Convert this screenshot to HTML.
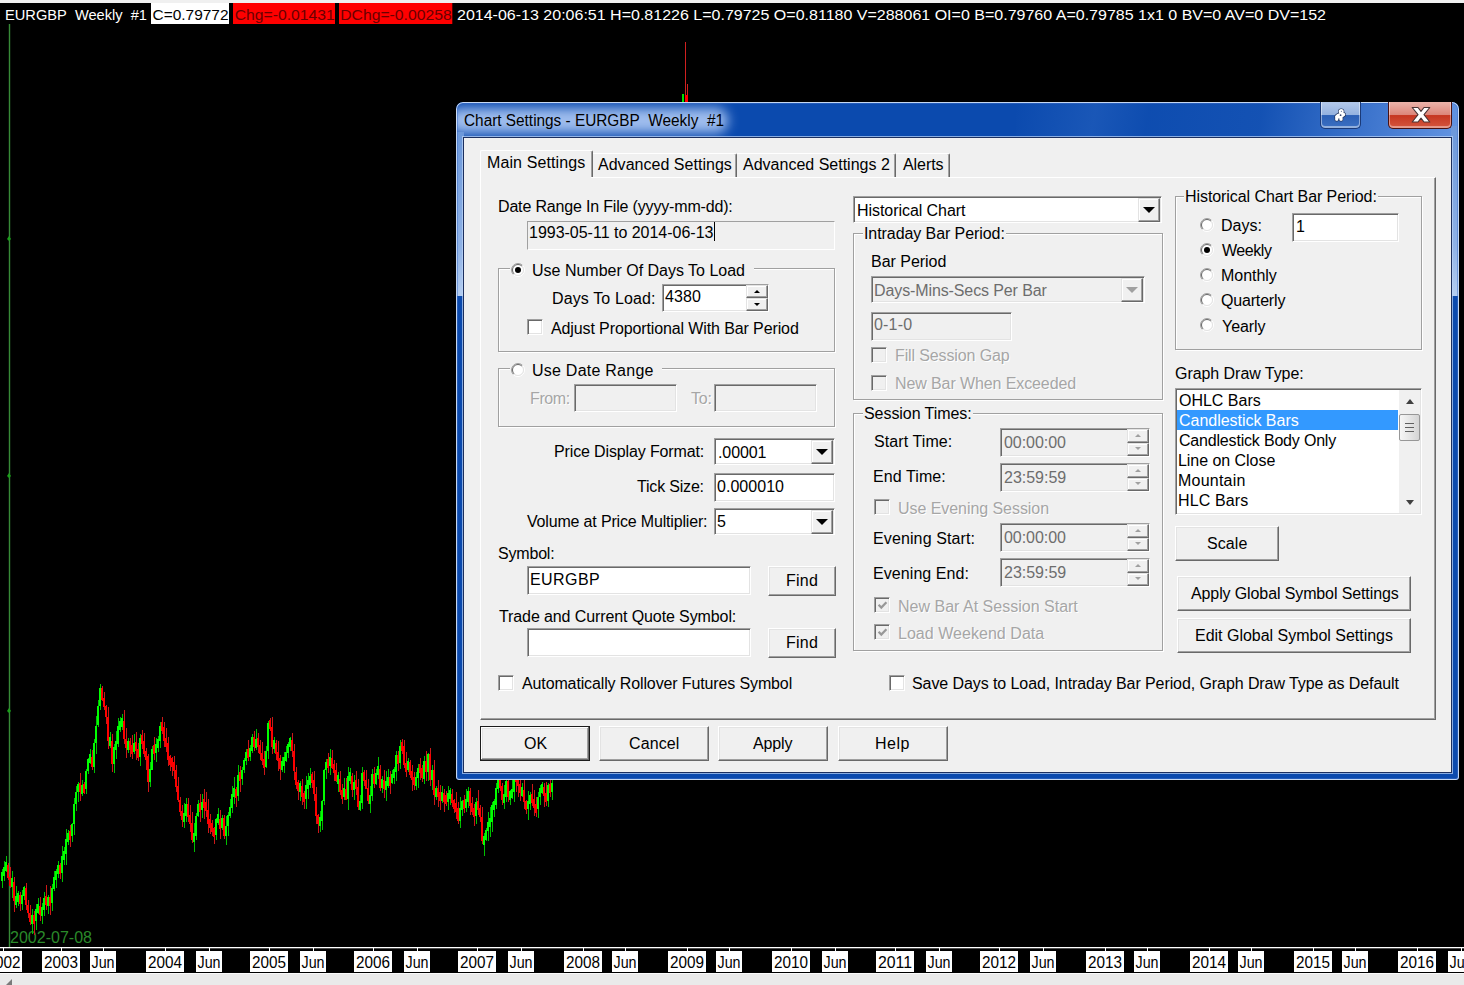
<!DOCTYPE html><html><head><meta charset="utf-8"><title>Chart Settings - EURGBP Weekly #1</title><style>
*{box-sizing:border-box;margin:0;padding:0}
html,body{width:1464px;height:985px;overflow:hidden;background:#000}
body{font-family:"Liberation Sans",sans-serif;font-size:16px;color:#000;position:relative}
.abs{position:absolute}
#chart{left:0;top:0;width:1464px;height:985px}
#scroll{left:0;top:973px;width:1464px;height:12px;background:#eaeaea;border-top:1px solid #fafafa}
#dlg{left:456px;top:102px;width:1003px;height:678px;border-radius:7px 7px 3px 3px;background:#0b4aae;overflow:hidden}
#dlg .edge{border-radius:7px 7px 3px 3px;left:0;top:0;right:0;bottom:0;box-shadow:inset 0 0 0 1px rgba(225,236,252,.85), inset 0 0 0 2px rgba(60,110,200,.5)}
#client{left:8px;top:36px;width:987px;height:634px;background:#f0f0f0;box-shadow:0 0 0 1px #1c2f5e, 0 0 0 2px rgba(190,214,248,.7)}
.t{position:absolute;white-space:pre;line-height:20px;height:20px;font-size:16px}
.dis{color:#a6a6a6;text-shadow:1px 1px 0 #fff}
.gt{color:#6d6d6d}
.edit{position:absolute;background:#fff;border:1px solid;border-color:#a0a0a0 #fff #fff #a0a0a0;box-shadow:inset 1px 1px 0 #696969, inset -1px -1px 0 #e3e3e3}
.edit.ro{background:#f0f0f0}
.btn{position:absolute;background:#f0f0f0;border:1px solid;border-color:#fff #696969 #696969 #fff;box-shadow:inset -1px -1px 0 #a0a0a0, inset 1px 1px 0 #e3e3e3}
.btn.def{border-color:#1c1c1c;box-shadow:inset -1px -1px 0 #696969, inset 1px 1px 0 #fff, inset -2px -2px 0 #a0a0a0, inset 2px 2px 0 #e3e3e3}
.grp{position:absolute;border:1px solid #a0a0a0;box-shadow:1px 1px 0 #fff, inset 1px 1px 0 #fff}
.gap{position:absolute;background:#f0f0f0;height:4px}
.cb{position:absolute;width:16px;height:16px;background:#fff;border:1px solid;border-color:#a0a0a0 #fff #fff #a0a0a0;box-shadow:inset 1px 1px 0 #696969, inset -1px -1px 0 #e3e3e3}
.cb.d{background:#f0f0f0}
.rb{position:absolute;width:14px;height:14px}
.dd{position:absolute;right:1px;top:1px;bottom:0px;width:22px;background:#f0f0f0;border:1px solid;border-color:#e3e3e3 #696969 #696969 #e3e3e3;box-shadow:inset -1px -1px 0 #a0a0a0, inset 1px 1px 0 #fff}
.dd:after{content:"";position:absolute;left:4px;top:8px;border:6px solid transparent;border-top:6px solid #000;border-bottom:0}
.dd.d:after{border-top-color:#a0a0a0}
.spin{position:absolute;right:0px;width:22px;height:calc(50% - 0px);background:#f0f0f0;border:1px solid;border-color:#e3e3e3 #696969 #696969 #e3e3e3;box-shadow:inset -1px -1px 0 #a0a0a0, inset 1px 1px 0 #fff}
.spin.u{top:0px}.spin.l{bottom:0px}
.spin:after{content:"";position:absolute;left:6.5px;top:3.5px;border:3.5px solid transparent}
.spin.u:after{border-bottom:3.5px solid #000;border-top:0}
.spin.l:after{border-top:3.5px solid #000;border-bottom:0}
.spin.d.u:after{border-bottom-color:#a0a0a0}.spin.d.l:after{border-top-color:#a0a0a0}
</style></head><body>
<svg id="chart" class="abs" width="1464" height="985" viewBox="0 0 1464 985" font-family="Liberation Sans, sans-serif" font-size="16">
<rect x="0" y="0" width="1464" height="985" fill="#000"/>
<rect x="0" y="0" width="1464" height="3" fill="#f0f0f0"/>
<rect x="151" y="3" width="78" height="21" fill="#fff"/>
<rect x="233" y="3" width="102" height="21" fill="#ff0000"/>
<rect x="339" y="3" width="113.3" height="21" fill="#ff0000"/>
<g style="white-space:pre" font-size="15">
<text x="5" y="20" textLength="142" lengthAdjust="spacingAndGlyphs" fill="#fff" >EURGBP&#160;&#160;Weekly&#160;&#160;#1</text>
<text x="152.5" y="20" textLength="76" lengthAdjust="spacingAndGlyphs" fill="#000" >C=0.79772</text>
<text x="234.7" y="20" textLength="100" lengthAdjust="spacingAndGlyphs" fill="#6a0000" >Chg=-0.01431</text>
<text x="340.2" y="20" textLength="111.5" lengthAdjust="spacingAndGlyphs" fill="#6a0000" >DChg=-0.00258</text>
<text x="457" y="20" textLength="869" lengthAdjust="spacingAndGlyphs" fill="#fff" >2014-06-13 20:06:51 H=0.81226 L=0.79725 O=0.81180 V=288061 OI=0 B=0.79760 A=0.79785 1x1 0 BV=0 AV=0 DV=152</text>
</g>
<rect x="8.8" y="24" width="1.4" height="923" fill="#378a37"/>
<polygon points="9,236 11,239 9,241 7,239" fill="#1a9e1a"/>
<polygon points="9,473 11,476 9,478 7,476" fill="#1a9e1a"/>
<polygon points="9,708 11,711 9,713 7,711" fill="#1a9e1a"/>
<text x="10" y="943" textLength="82" lengthAdjust="spacingAndGlyphs" fill="#2a8a2a" >2002-07-08</text>
<rect x="2" y="869" width="1" height="19" fill="#00c000"/>
<rect x="1" y="872" width="2" height="9" fill="#00ff00"/>
<rect x="4" y="861" width="1" height="20" fill="#00c000"/>
<rect x="3" y="867" width="2" height="9" fill="#00ff00"/>
<rect x="6" y="856" width="1" height="16" fill="#00c000"/>
<rect x="5" y="862" width="2" height="9" fill="#00ff00"/>
<rect x="8" y="863" width="1" height="17" fill="#cc1818"/>
<rect x="7" y="865" width="2" height="13" fill="#ff0000"/>
<rect x="10" y="867" width="1" height="21" fill="#cc1818"/>
<rect x="9" y="877" width="2" height="9" fill="#ff0000"/>
<rect x="12" y="871" width="1" height="27" fill="#00c000"/>
<rect x="11" y="878" width="2" height="9" fill="#00ff00"/>
<rect x="14" y="877" width="1" height="35" fill="#cc1818"/>
<rect x="13" y="882" width="2" height="19" fill="#ff0000"/>
<rect x="16" y="886" width="1" height="22" fill="#00c000"/>
<rect x="15" y="896" width="2" height="9" fill="#00ff00"/>
<rect x="18" y="891" width="1" height="15" fill="#00c000"/>
<rect x="17" y="893" width="2" height="9" fill="#00ff00"/>
<rect x="20" y="892" width="1" height="19" fill="#cc1818"/>
<rect x="19" y="895" width="2" height="9" fill="#ff0000"/>
<rect x="22" y="890" width="1" height="20" fill="#00c000"/>
<rect x="21" y="895" width="2" height="9" fill="#00ff00"/>
<rect x="24" y="886" width="1" height="14" fill="#00c000"/>
<rect x="23" y="887" width="2" height="9" fill="#00ff00"/>
<rect x="26" y="883" width="1" height="27" fill="#cc1818"/>
<rect x="25" y="888" width="2" height="17" fill="#ff0000"/>
<rect x="28" y="900" width="1" height="18" fill="#cc1818"/>
<rect x="27" y="905" width="2" height="8" fill="#ff0000"/>
<rect x="30" y="905" width="1" height="20" fill="#cc1818"/>
<rect x="29" y="913" width="2" height="9" fill="#ff0000"/>
<rect x="32" y="909" width="1" height="25" fill="#00c000"/>
<rect x="31" y="915" width="2" height="9" fill="#00ff00"/>
<rect x="34" y="911" width="1" height="24" fill="#cc1818"/>
<rect x="33" y="915" width="2" height="9" fill="#ff0000"/>
<rect x="36" y="904" width="1" height="26" fill="#00c000"/>
<rect x="35" y="909" width="2" height="12" fill="#00ff00"/>
<rect x="38" y="898" width="1" height="16" fill="#00c000"/>
<rect x="37" y="904" width="2" height="9" fill="#00ff00"/>
<rect x="40" y="897" width="1" height="24" fill="#cc1818"/>
<rect x="39" y="906" width="2" height="9" fill="#ff0000"/>
<rect x="42" y="903" width="1" height="21" fill="#00c000"/>
<rect x="41" y="907" width="2" height="9" fill="#00ff00"/>
<rect x="44" y="892" width="1" height="24" fill="#00c000"/>
<rect x="43" y="898" width="2" height="12" fill="#00ff00"/>
<rect x="46" y="885" width="1" height="25" fill="#cc1818"/>
<rect x="45" y="896" width="2" height="9" fill="#ff0000"/>
<rect x="48" y="895" width="1" height="19" fill="#00c000"/>
<rect x="47" y="897" width="2" height="9" fill="#00ff00"/>
<rect x="50" y="886" width="1" height="29" fill="#cc1818"/>
<rect x="49" y="897" width="2" height="9" fill="#ff0000"/>
<rect x="52" y="884" width="1" height="27" fill="#00c000"/>
<rect x="51" y="888" width="2" height="15" fill="#00ff00"/>
<rect x="54" y="871" width="1" height="20" fill="#00c000"/>
<rect x="53" y="877" width="2" height="12" fill="#00ff00"/>
<rect x="56" y="869" width="1" height="19" fill="#00c000"/>
<rect x="55" y="871" width="2" height="9" fill="#00ff00"/>
<rect x="58" y="861" width="1" height="17" fill="#00c000"/>
<rect x="57" y="865" width="2" height="9" fill="#00ff00"/>
<rect x="60" y="863" width="1" height="16" fill="#cc1818"/>
<rect x="59" y="865" width="2" height="9" fill="#ff0000"/>
<rect x="62" y="846" width="1" height="36" fill="#00c000"/>
<rect x="61" y="856" width="2" height="17" fill="#00ff00"/>
<rect x="64" y="847" width="1" height="18" fill="#00c000"/>
<rect x="63" y="851" width="2" height="9" fill="#00ff00"/>
<rect x="66" y="829" width="1" height="36" fill="#00c000"/>
<rect x="65" y="839" width="2" height="15" fill="#00ff00"/>
<rect x="68" y="830" width="1" height="15" fill="#00c000"/>
<rect x="67" y="833" width="2" height="9" fill="#00ff00"/>
<rect x="70" y="825" width="1" height="22" fill="#cc1818"/>
<rect x="69" y="831" width="2" height="9" fill="#ff0000"/>
<rect x="72" y="823" width="1" height="19" fill="#00c000"/>
<rect x="71" y="824" width="2" height="12" fill="#00ff00"/>
<rect x="74" y="798" width="1" height="37" fill="#00c000"/>
<rect x="73" y="804" width="2" height="20" fill="#00ff00"/>
<rect x="76" y="786" width="1" height="25" fill="#00c000"/>
<rect x="75" y="792" width="2" height="12" fill="#00ff00"/>
<rect x="78" y="782" width="1" height="20" fill="#00c000"/>
<rect x="77" y="784" width="2" height="8" fill="#00ff00"/>
<rect x="80" y="773" width="1" height="28" fill="#cc1818"/>
<rect x="79" y="783" width="2" height="9" fill="#ff0000"/>
<rect x="82" y="780" width="1" height="16" fill="#00c000"/>
<rect x="81" y="785" width="2" height="9" fill="#00ff00"/>
<rect x="84" y="782" width="1" height="12" fill="#cc1818"/>
<rect x="83" y="784" width="2" height="9" fill="#ff0000"/>
<rect x="86" y="769" width="1" height="25" fill="#00c000"/>
<rect x="85" y="771" width="2" height="18" fill="#00ff00"/>
<rect x="88" y="758" width="1" height="16" fill="#00c000"/>
<rect x="87" y="759" width="2" height="12" fill="#00ff00"/>
<rect x="90" y="749" width="1" height="15" fill="#00c000"/>
<rect x="89" y="754" width="2" height="9" fill="#00ff00"/>
<rect x="92" y="750" width="1" height="20" fill="#cc1818"/>
<rect x="91" y="757" width="2" height="10" fill="#ff0000"/>
<rect x="94" y="739" width="1" height="34" fill="#00c000"/>
<rect x="93" y="743" width="2" height="24" fill="#00ff00"/>
<rect x="96" y="716" width="1" height="38" fill="#00c000"/>
<rect x="95" y="726" width="2" height="17" fill="#00ff00"/>
<rect x="98" y="700" width="1" height="27" fill="#00c000"/>
<rect x="97" y="706" width="2" height="19" fill="#00ff00"/>
<rect x="100" y="684" width="1" height="26" fill="#00c000"/>
<rect x="99" y="688" width="2" height="18" fill="#00ff00"/>
<rect x="102" y="686" width="1" height="15" fill="#cc1818"/>
<rect x="101" y="688" width="2" height="12" fill="#ff0000"/>
<rect x="104" y="692" width="1" height="18" fill="#cc1818"/>
<rect x="103" y="698" width="2" height="9" fill="#ff0000"/>
<rect x="106" y="705" width="1" height="19" fill="#cc1818"/>
<rect x="105" y="706" width="2" height="11" fill="#ff0000"/>
<rect x="108" y="707" width="1" height="42" fill="#cc1818"/>
<rect x="107" y="717" width="2" height="24" fill="#ff0000"/>
<rect x="110" y="732" width="1" height="16" fill="#00c000"/>
<rect x="109" y="737" width="2" height="9" fill="#00ff00"/>
<rect x="112" y="734" width="1" height="38" fill="#cc1818"/>
<rect x="111" y="741" width="2" height="23" fill="#ff0000"/>
<rect x="114" y="744" width="1" height="29" fill="#00c000"/>
<rect x="113" y="747" width="2" height="17" fill="#00ff00"/>
<rect x="116" y="731" width="1" height="28" fill="#00c000"/>
<rect x="115" y="741" width="2" height="9" fill="#00ff00"/>
<rect x="118" y="718" width="1" height="29" fill="#00c000"/>
<rect x="117" y="726" width="2" height="18" fill="#00ff00"/>
<rect x="120" y="717" width="1" height="15" fill="#00c000"/>
<rect x="119" y="721" width="2" height="9" fill="#00ff00"/>
<rect x="122" y="714" width="1" height="16" fill="#00c000"/>
<rect x="121" y="718" width="2" height="9" fill="#00ff00"/>
<rect x="124" y="710" width="1" height="34" fill="#cc1818"/>
<rect x="123" y="721" width="2" height="18" fill="#ff0000"/>
<rect x="126" y="728" width="1" height="30" fill="#cc1818"/>
<rect x="125" y="739" width="2" height="9" fill="#ff0000"/>
<rect x="128" y="738" width="1" height="15" fill="#00c000"/>
<rect x="127" y="741" width="2" height="9" fill="#00ff00"/>
<rect x="130" y="738" width="1" height="19" fill="#cc1818"/>
<rect x="129" y="741" width="2" height="9" fill="#ff0000"/>
<rect x="132" y="735" width="1" height="24" fill="#cc1818"/>
<rect x="131" y="745" width="2" height="9" fill="#ff0000"/>
<rect x="134" y="734" width="1" height="20" fill="#00c000"/>
<rect x="133" y="743" width="2" height="9" fill="#00ff00"/>
<rect x="136" y="732" width="1" height="28" fill="#cc1818"/>
<rect x="135" y="742" width="2" height="9" fill="#ff0000"/>
<rect x="138" y="743" width="1" height="18" fill="#cc1818"/>
<rect x="137" y="749" width="2" height="9" fill="#ff0000"/>
<rect x="140" y="734" width="1" height="32" fill="#00c000"/>
<rect x="139" y="738" width="2" height="19" fill="#00ff00"/>
<rect x="142" y="730" width="1" height="19" fill="#cc1818"/>
<rect x="141" y="735" width="2" height="9" fill="#ff0000"/>
<rect x="144" y="733" width="1" height="24" fill="#cc1818"/>
<rect x="143" y="741" width="2" height="13" fill="#ff0000"/>
<rect x="146" y="748" width="1" height="22" fill="#cc1818"/>
<rect x="145" y="751" width="2" height="9" fill="#ff0000"/>
<rect x="148" y="754" width="1" height="38" fill="#cc1818"/>
<rect x="147" y="756" width="2" height="26" fill="#ff0000"/>
<rect x="150" y="762" width="1" height="25" fill="#00c000"/>
<rect x="149" y="769" width="2" height="13" fill="#00ff00"/>
<rect x="152" y="746" width="1" height="24" fill="#00c000"/>
<rect x="151" y="749" width="2" height="21" fill="#00ff00"/>
<rect x="154" y="737" width="1" height="23" fill="#cc1818"/>
<rect x="153" y="745" width="2" height="9" fill="#ff0000"/>
<rect x="156" y="738" width="1" height="24" fill="#00c000"/>
<rect x="155" y="744" width="2" height="9" fill="#00ff00"/>
<rect x="158" y="736" width="1" height="16" fill="#00c000"/>
<rect x="157" y="739" width="2" height="9" fill="#00ff00"/>
<rect x="160" y="722" width="1" height="26" fill="#00c000"/>
<rect x="159" y="726" width="2" height="15" fill="#00ff00"/>
<rect x="162" y="717" width="1" height="17" fill="#cc1818"/>
<rect x="161" y="722" width="2" height="9" fill="#ff0000"/>
<rect x="164" y="722" width="1" height="25" fill="#cc1818"/>
<rect x="163" y="727" width="2" height="14" fill="#ff0000"/>
<rect x="166" y="728" width="1" height="24" fill="#cc1818"/>
<rect x="165" y="738" width="2" height="9" fill="#ff0000"/>
<rect x="168" y="737" width="1" height="29" fill="#cc1818"/>
<rect x="167" y="743" width="2" height="17" fill="#ff0000"/>
<rect x="170" y="755" width="1" height="16" fill="#cc1818"/>
<rect x="169" y="756" width="2" height="9" fill="#ff0000"/>
<rect x="172" y="757" width="1" height="19" fill="#cc1818"/>
<rect x="171" y="758" width="2" height="9" fill="#ff0000"/>
<rect x="174" y="756" width="1" height="23" fill="#cc1818"/>
<rect x="173" y="762" width="2" height="9" fill="#ff0000"/>
<rect x="176" y="765" width="1" height="27" fill="#cc1818"/>
<rect x="175" y="770" width="2" height="17" fill="#ff0000"/>
<rect x="178" y="777" width="1" height="25" fill="#cc1818"/>
<rect x="177" y="786" width="2" height="14" fill="#ff0000"/>
<rect x="180" y="797" width="1" height="19" fill="#cc1818"/>
<rect x="179" y="800" width="2" height="12" fill="#ff0000"/>
<rect x="182" y="805" width="1" height="22" fill="#cc1818"/>
<rect x="181" y="811" width="2" height="9" fill="#ff0000"/>
<rect x="184" y="803" width="1" height="25" fill="#00c000"/>
<rect x="183" y="813" width="2" height="9" fill="#00ff00"/>
<rect x="186" y="798" width="1" height="24" fill="#00c000"/>
<rect x="185" y="804" width="2" height="12" fill="#00ff00"/>
<rect x="188" y="798" width="1" height="24" fill="#cc1818"/>
<rect x="187" y="804" width="2" height="13" fill="#ff0000"/>
<rect x="190" y="805" width="1" height="27" fill="#cc1818"/>
<rect x="189" y="815" width="2" height="9" fill="#ff0000"/>
<rect x="192" y="812" width="1" height="31" fill="#cc1818"/>
<rect x="191" y="823" width="2" height="17" fill="#ff0000"/>
<rect x="194" y="823" width="1" height="29" fill="#00c000"/>
<rect x="193" y="833" width="2" height="9" fill="#00ff00"/>
<rect x="196" y="813" width="1" height="27" fill="#00c000"/>
<rect x="195" y="816" width="2" height="20" fill="#00ff00"/>
<rect x="198" y="800" width="1" height="17" fill="#00c000"/>
<rect x="197" y="804" width="2" height="12" fill="#00ff00"/>
<rect x="200" y="794" width="1" height="28" fill="#cc1818"/>
<rect x="199" y="803" width="2" height="9" fill="#ff0000"/>
<rect x="202" y="794" width="1" height="24" fill="#00c000"/>
<rect x="201" y="802" width="2" height="8" fill="#00ff00"/>
<rect x="204" y="789" width="1" height="30" fill="#cc1818"/>
<rect x="203" y="799" width="2" height="9" fill="#ff0000"/>
<rect x="206" y="792" width="1" height="25" fill="#cc1818"/>
<rect x="205" y="802" width="2" height="9" fill="#ff0000"/>
<rect x="208" y="799" width="1" height="34" fill="#cc1818"/>
<rect x="207" y="810" width="2" height="14" fill="#ff0000"/>
<rect x="210" y="814" width="1" height="20" fill="#cc1818"/>
<rect x="209" y="819" width="2" height="9" fill="#ff0000"/>
<rect x="212" y="820" width="1" height="16" fill="#cc1818"/>
<rect x="211" y="823" width="2" height="9" fill="#ff0000"/>
<rect x="214" y="827" width="1" height="17" fill="#cc1818"/>
<rect x="213" y="828" width="2" height="9" fill="#ff0000"/>
<rect x="216" y="818" width="1" height="22" fill="#00c000"/>
<rect x="215" y="819" width="2" height="16" fill="#00ff00"/>
<rect x="218" y="808" width="1" height="17" fill="#00c000"/>
<rect x="217" y="814" width="2" height="9" fill="#00ff00"/>
<rect x="220" y="810" width="1" height="29" fill="#cc1818"/>
<rect x="219" y="819" width="2" height="10" fill="#ff0000"/>
<rect x="222" y="815" width="1" height="15" fill="#00c000"/>
<rect x="221" y="818" width="2" height="10" fill="#00ff00"/>
<rect x="224" y="815" width="1" height="24" fill="#cc1818"/>
<rect x="223" y="818" width="2" height="18" fill="#ff0000"/>
<rect x="226" y="816" width="1" height="29" fill="#00c000"/>
<rect x="225" y="826" width="2" height="10" fill="#00ff00"/>
<rect x="228" y="812" width="1" height="24" fill="#00c000"/>
<rect x="227" y="815" width="2" height="11" fill="#00ff00"/>
<rect x="230" y="799" width="1" height="19" fill="#00c000"/>
<rect x="229" y="807" width="2" height="9" fill="#00ff00"/>
<rect x="232" y="786" width="1" height="27" fill="#00c000"/>
<rect x="231" y="794" width="2" height="14" fill="#00ff00"/>
<rect x="234" y="777" width="1" height="27" fill="#00c000"/>
<rect x="233" y="788" width="2" height="9" fill="#00ff00"/>
<rect x="236" y="787" width="1" height="20" fill="#cc1818"/>
<rect x="235" y="789" width="2" height="9" fill="#ff0000"/>
<rect x="238" y="765" width="1" height="36" fill="#00c000"/>
<rect x="237" y="775" width="2" height="21" fill="#00ff00"/>
<rect x="240" y="766" width="1" height="26" fill="#cc1818"/>
<rect x="239" y="772" width="2" height="9" fill="#ff0000"/>
<rect x="242" y="767" width="1" height="18" fill="#00c000"/>
<rect x="241" y="770" width="2" height="9" fill="#00ff00"/>
<rect x="244" y="758" width="1" height="15" fill="#00c000"/>
<rect x="243" y="760" width="2" height="10" fill="#00ff00"/>
<rect x="246" y="749" width="1" height="16" fill="#00c000"/>
<rect x="245" y="752" width="2" height="9" fill="#00ff00"/>
<rect x="248" y="740" width="1" height="21" fill="#cc1818"/>
<rect x="247" y="749" width="2" height="9" fill="#ff0000"/>
<rect x="250" y="745" width="1" height="16" fill="#00c000"/>
<rect x="249" y="748" width="2" height="9" fill="#00ff00"/>
<rect x="252" y="734" width="1" height="19" fill="#00c000"/>
<rect x="251" y="737" width="2" height="14" fill="#00ff00"/>
<rect x="254" y="731" width="1" height="20" fill="#cc1818"/>
<rect x="253" y="737" width="2" height="10" fill="#ff0000"/>
<rect x="256" y="729" width="1" height="21" fill="#00c000"/>
<rect x="255" y="739" width="2" height="9" fill="#00ff00"/>
<rect x="258" y="733" width="1" height="20" fill="#cc1818"/>
<rect x="257" y="738" width="2" height="9" fill="#ff0000"/>
<rect x="260" y="740" width="1" height="20" fill="#cc1818"/>
<rect x="259" y="745" width="2" height="9" fill="#ff0000"/>
<rect x="262" y="742" width="1" height="23" fill="#cc1818"/>
<rect x="261" y="753" width="2" height="8" fill="#ff0000"/>
<rect x="264" y="751" width="1" height="24" fill="#cc1818"/>
<rect x="263" y="759" width="2" height="9" fill="#ff0000"/>
<rect x="266" y="746" width="1" height="22" fill="#00c000"/>
<rect x="265" y="751" width="2" height="16" fill="#00ff00"/>
<rect x="268" y="721" width="1" height="38" fill="#00c000"/>
<rect x="267" y="723" width="2" height="28" fill="#00ff00"/>
<rect x="270" y="718" width="1" height="13" fill="#cc1818"/>
<rect x="269" y="720" width="2" height="9" fill="#ff0000"/>
<rect x="272" y="717" width="1" height="37" fill="#cc1818"/>
<rect x="271" y="727" width="2" height="20" fill="#ff0000"/>
<rect x="274" y="737" width="1" height="16" fill="#00c000"/>
<rect x="273" y="740" width="2" height="9" fill="#00ff00"/>
<rect x="276" y="740" width="1" height="20" fill="#cc1818"/>
<rect x="275" y="743" width="2" height="11" fill="#ff0000"/>
<rect x="278" y="741" width="1" height="30" fill="#cc1818"/>
<rect x="277" y="752" width="2" height="9" fill="#ff0000"/>
<rect x="280" y="755" width="1" height="25" fill="#cc1818"/>
<rect x="279" y="758" width="2" height="11" fill="#ff0000"/>
<rect x="282" y="757" width="1" height="15" fill="#00c000"/>
<rect x="281" y="761" width="2" height="9" fill="#00ff00"/>
<rect x="284" y="752" width="1" height="21" fill="#00c000"/>
<rect x="283" y="757" width="2" height="9" fill="#00ff00"/>
<rect x="286" y="746" width="1" height="16" fill="#00c000"/>
<rect x="285" y="752" width="2" height="9" fill="#00ff00"/>
<rect x="288" y="742" width="1" height="16" fill="#00c000"/>
<rect x="287" y="744" width="2" height="9" fill="#00ff00"/>
<rect x="290" y="737" width="1" height="14" fill="#00c000"/>
<rect x="289" y="738" width="2" height="9" fill="#00ff00"/>
<rect x="292" y="733" width="1" height="24" fill="#cc1818"/>
<rect x="291" y="740" width="2" height="11" fill="#ff0000"/>
<rect x="294" y="744" width="1" height="36" fill="#cc1818"/>
<rect x="293" y="751" width="2" height="20" fill="#ff0000"/>
<rect x="296" y="767" width="1" height="22" fill="#cc1818"/>
<rect x="295" y="772" width="2" height="13" fill="#ff0000"/>
<rect x="298" y="780" width="1" height="20" fill="#cc1818"/>
<rect x="297" y="782" width="2" height="9" fill="#ff0000"/>
<rect x="300" y="781" width="1" height="20" fill="#00c000"/>
<rect x="299" y="783" width="2" height="9" fill="#00ff00"/>
<rect x="302" y="779" width="1" height="26" fill="#cc1818"/>
<rect x="301" y="786" width="2" height="11" fill="#ff0000"/>
<rect x="304" y="791" width="1" height="18" fill="#cc1818"/>
<rect x="303" y="793" width="2" height="9" fill="#ff0000"/>
<rect x="306" y="776" width="1" height="33" fill="#00c000"/>
<rect x="305" y="785" width="2" height="14" fill="#00ff00"/>
<rect x="308" y="773" width="1" height="26" fill="#00c000"/>
<rect x="307" y="780" width="2" height="9" fill="#00ff00"/>
<rect x="310" y="768" width="1" height="20" fill="#00c000"/>
<rect x="309" y="776" width="2" height="9" fill="#00ff00"/>
<rect x="312" y="772" width="1" height="16" fill="#cc1818"/>
<rect x="311" y="774" width="2" height="9" fill="#ff0000"/>
<rect x="314" y="771" width="1" height="30" fill="#cc1818"/>
<rect x="313" y="780" width="2" height="14" fill="#ff0000"/>
<rect x="316" y="787" width="1" height="37" fill="#cc1818"/>
<rect x="315" y="794" width="2" height="22" fill="#ff0000"/>
<rect x="318" y="814" width="1" height="19" fill="#cc1818"/>
<rect x="317" y="815" width="2" height="9" fill="#ff0000"/>
<rect x="320" y="811" width="1" height="21" fill="#00c000"/>
<rect x="319" y="817" width="2" height="9" fill="#00ff00"/>
<rect x="322" y="800" width="1" height="30" fill="#00c000"/>
<rect x="321" y="801" width="2" height="20" fill="#00ff00"/>
<rect x="324" y="769" width="1" height="36" fill="#00c000"/>
<rect x="323" y="770" width="2" height="31" fill="#00ff00"/>
<rect x="326" y="759" width="1" height="20" fill="#00c000"/>
<rect x="325" y="762" width="2" height="8" fill="#00ff00"/>
<rect x="328" y="753" width="1" height="20" fill="#cc1818"/>
<rect x="327" y="759" width="2" height="9" fill="#ff0000"/>
<rect x="330" y="749" width="1" height="26" fill="#00c000"/>
<rect x="329" y="757" width="2" height="9" fill="#00ff00"/>
<rect x="332" y="750" width="1" height="19" fill="#cc1818"/>
<rect x="331" y="758" width="2" height="10" fill="#ff0000"/>
<rect x="334" y="760" width="1" height="21" fill="#cc1818"/>
<rect x="333" y="764" width="2" height="9" fill="#ff0000"/>
<rect x="336" y="763" width="1" height="19" fill="#cc1818"/>
<rect x="335" y="770" width="2" height="11" fill="#ff0000"/>
<rect x="338" y="772" width="1" height="20" fill="#00c000"/>
<rect x="337" y="775" width="2" height="9" fill="#00ff00"/>
<rect x="340" y="771" width="1" height="24" fill="#cc1818"/>
<rect x="339" y="779" width="2" height="13" fill="#ff0000"/>
<rect x="342" y="784" width="1" height="20" fill="#cc1818"/>
<rect x="341" y="790" width="2" height="9" fill="#ff0000"/>
<rect x="344" y="778" width="1" height="22" fill="#00c000"/>
<rect x="343" y="788" width="2" height="9" fill="#00ff00"/>
<rect x="346" y="778" width="1" height="22" fill="#cc1818"/>
<rect x="345" y="789" width="2" height="11" fill="#ff0000"/>
<rect x="348" y="767" width="1" height="43" fill="#00c000"/>
<rect x="347" y="776" width="2" height="23" fill="#00ff00"/>
<rect x="350" y="768" width="1" height="16" fill="#00c000"/>
<rect x="349" y="772" width="2" height="9" fill="#00ff00"/>
<rect x="352" y="773" width="1" height="24" fill="#cc1818"/>
<rect x="351" y="776" width="2" height="14" fill="#ff0000"/>
<rect x="354" y="775" width="1" height="25" fill="#00c000"/>
<rect x="353" y="782" width="2" height="8" fill="#00ff00"/>
<rect x="356" y="771" width="1" height="24" fill="#cc1818"/>
<rect x="355" y="780" width="2" height="9" fill="#ff0000"/>
<rect x="358" y="779" width="1" height="31" fill="#cc1818"/>
<rect x="357" y="787" width="2" height="20" fill="#ff0000"/>
<rect x="360" y="795" width="1" height="16" fill="#00c000"/>
<rect x="359" y="801" width="2" height="9" fill="#00ff00"/>
<rect x="362" y="767" width="1" height="42" fill="#00c000"/>
<rect x="361" y="773" width="2" height="30" fill="#00ff00"/>
<rect x="364" y="770" width="1" height="16" fill="#cc1818"/>
<rect x="363" y="772" width="2" height="9" fill="#ff0000"/>
<rect x="366" y="770" width="1" height="19" fill="#cc1818"/>
<rect x="365" y="780" width="2" height="9" fill="#ff0000"/>
<rect x="368" y="779" width="1" height="25" fill="#cc1818"/>
<rect x="367" y="788" width="2" height="13" fill="#ff0000"/>
<rect x="370" y="786" width="1" height="27" fill="#00c000"/>
<rect x="369" y="795" width="2" height="9" fill="#00ff00"/>
<rect x="372" y="769" width="1" height="32" fill="#00c000"/>
<rect x="371" y="774" width="2" height="22" fill="#00ff00"/>
<rect x="374" y="767" width="1" height="21" fill="#cc1818"/>
<rect x="373" y="774" width="2" height="10" fill="#ff0000"/>
<rect x="376" y="769" width="1" height="16" fill="#00c000"/>
<rect x="375" y="773" width="2" height="11" fill="#00ff00"/>
<rect x="378" y="757" width="1" height="22" fill="#00c000"/>
<rect x="377" y="766" width="2" height="9" fill="#00ff00"/>
<rect x="380" y="765" width="1" height="26" fill="#cc1818"/>
<rect x="379" y="769" width="2" height="19" fill="#ff0000"/>
<rect x="382" y="776" width="1" height="17" fill="#00c000"/>
<rect x="381" y="779" width="2" height="9" fill="#00ff00"/>
<rect x="384" y="770" width="1" height="28" fill="#cc1818"/>
<rect x="383" y="780" width="2" height="9" fill="#ff0000"/>
<rect x="386" y="771" width="1" height="30" fill="#00c000"/>
<rect x="385" y="781" width="2" height="9" fill="#00ff00"/>
<rect x="388" y="769" width="1" height="19" fill="#00c000"/>
<rect x="387" y="777" width="2" height="9" fill="#00ff00"/>
<rect x="390" y="771" width="1" height="23" fill="#cc1818"/>
<rect x="389" y="777" width="2" height="9" fill="#ff0000"/>
<rect x="392" y="770" width="1" height="14" fill="#00c000"/>
<rect x="391" y="774" width="2" height="9" fill="#00ff00"/>
<rect x="394" y="767" width="1" height="17" fill="#00c000"/>
<rect x="393" y="769" width="2" height="9" fill="#00ff00"/>
<rect x="396" y="751" width="1" height="30" fill="#00c000"/>
<rect x="395" y="755" width="2" height="17" fill="#00ff00"/>
<rect x="398" y="751" width="1" height="20" fill="#cc1818"/>
<rect x="397" y="755" width="2" height="9" fill="#ff0000"/>
<rect x="400" y="740" width="1" height="29" fill="#00c000"/>
<rect x="399" y="746" width="2" height="17" fill="#00ff00"/>
<rect x="402" y="739" width="1" height="15" fill="#cc1818"/>
<rect x="401" y="742" width="2" height="9" fill="#ff0000"/>
<rect x="404" y="740" width="1" height="28" fill="#cc1818"/>
<rect x="403" y="746" width="2" height="19" fill="#ff0000"/>
<rect x="406" y="752" width="1" height="25" fill="#cc1818"/>
<rect x="405" y="763" width="2" height="9" fill="#ff0000"/>
<rect x="408" y="758" width="1" height="14" fill="#00c000"/>
<rect x="407" y="761" width="2" height="9" fill="#00ff00"/>
<rect x="410" y="760" width="1" height="18" fill="#cc1818"/>
<rect x="409" y="762" width="2" height="13" fill="#ff0000"/>
<rect x="412" y="765" width="1" height="26" fill="#cc1818"/>
<rect x="411" y="771" width="2" height="9" fill="#ff0000"/>
<rect x="414" y="772" width="1" height="18" fill="#cc1818"/>
<rect x="413" y="777" width="2" height="8" fill="#ff0000"/>
<rect x="416" y="772" width="1" height="18" fill="#00c000"/>
<rect x="415" y="777" width="2" height="9" fill="#00ff00"/>
<rect x="418" y="764" width="1" height="24" fill="#00c000"/>
<rect x="417" y="768" width="2" height="10" fill="#00ff00"/>
<rect x="420" y="758" width="1" height="22" fill="#cc1818"/>
<rect x="419" y="764" width="2" height="9" fill="#ff0000"/>
<rect x="422" y="765" width="1" height="17" fill="#cc1818"/>
<rect x="421" y="768" width="2" height="10" fill="#ff0000"/>
<rect x="424" y="756" width="1" height="28" fill="#00c000"/>
<rect x="423" y="761" width="2" height="18" fill="#00ff00"/>
<rect x="426" y="751" width="1" height="30" fill="#cc1818"/>
<rect x="425" y="761" width="2" height="11" fill="#ff0000"/>
<rect x="428" y="753" width="1" height="28" fill="#00c000"/>
<rect x="427" y="754" width="2" height="18" fill="#00ff00"/>
<rect x="430" y="748" width="1" height="38" fill="#cc1818"/>
<rect x="429" y="754" width="2" height="26" fill="#ff0000"/>
<rect x="432" y="765" width="1" height="25" fill="#00c000"/>
<rect x="431" y="770" width="2" height="10" fill="#00ff00"/>
<rect x="434" y="760" width="1" height="45" fill="#cc1818"/>
<rect x="433" y="770" width="2" height="25" fill="#ff0000"/>
<rect x="436" y="786" width="1" height="14" fill="#00c000"/>
<rect x="435" y="788" width="2" height="9" fill="#00ff00"/>
<rect x="438" y="780" width="1" height="27" fill="#cc1818"/>
<rect x="437" y="788" width="2" height="9" fill="#ff0000"/>
<rect x="440" y="785" width="1" height="25" fill="#cc1818"/>
<rect x="439" y="792" width="2" height="9" fill="#ff0000"/>
<rect x="442" y="786" width="1" height="17" fill="#00c000"/>
<rect x="441" y="792" width="2" height="9" fill="#00ff00"/>
<rect x="444" y="789" width="1" height="23" fill="#cc1818"/>
<rect x="443" y="793" width="2" height="9" fill="#ff0000"/>
<rect x="446" y="791" width="1" height="15" fill="#cc1818"/>
<rect x="445" y="795" width="2" height="9" fill="#ff0000"/>
<rect x="448" y="786" width="1" height="24" fill="#00c000"/>
<rect x="447" y="793" width="2" height="9" fill="#00ff00"/>
<rect x="450" y="788" width="1" height="17" fill="#00c000"/>
<rect x="449" y="790" width="2" height="9" fill="#00ff00"/>
<rect x="452" y="789" width="1" height="18" fill="#cc1818"/>
<rect x="451" y="794" width="2" height="9" fill="#ff0000"/>
<rect x="454" y="799" width="1" height="14" fill="#cc1818"/>
<rect x="453" y="800" width="2" height="9" fill="#ff0000"/>
<rect x="456" y="792" width="1" height="27" fill="#cc1818"/>
<rect x="455" y="803" width="2" height="9" fill="#ff0000"/>
<rect x="458" y="802" width="1" height="22" fill="#cc1818"/>
<rect x="457" y="808" width="2" height="13" fill="#ff0000"/>
<rect x="460" y="797" width="1" height="31" fill="#00c000"/>
<rect x="459" y="808" width="2" height="13" fill="#00ff00"/>
<rect x="462" y="800" width="1" height="16" fill="#00c000"/>
<rect x="461" y="801" width="2" height="9" fill="#00ff00"/>
<rect x="464" y="795" width="1" height="18" fill="#cc1818"/>
<rect x="463" y="800" width="2" height="9" fill="#ff0000"/>
<rect x="466" y="789" width="1" height="23" fill="#00c000"/>
<rect x="465" y="799" width="2" height="9" fill="#00ff00"/>
<rect x="468" y="787" width="1" height="21" fill="#00c000"/>
<rect x="467" y="791" width="2" height="11" fill="#00ff00"/>
<rect x="470" y="788" width="1" height="27" fill="#cc1818"/>
<rect x="469" y="791" width="2" height="15" fill="#ff0000"/>
<rect x="472" y="797" width="1" height="18" fill="#cc1818"/>
<rect x="471" y="803" width="2" height="9" fill="#ff0000"/>
<rect x="474" y="804" width="1" height="22" fill="#cc1818"/>
<rect x="473" y="808" width="2" height="9" fill="#ff0000"/>
<rect x="476" y="798" width="1" height="26" fill="#00c000"/>
<rect x="475" y="802" width="2" height="14" fill="#00ff00"/>
<rect x="478" y="790" width="1" height="25" fill="#cc1818"/>
<rect x="477" y="801" width="2" height="9" fill="#ff0000"/>
<rect x="480" y="805" width="1" height="17" fill="#cc1818"/>
<rect x="479" y="808" width="2" height="9" fill="#ff0000"/>
<rect x="482" y="807" width="1" height="37" fill="#cc1818"/>
<rect x="481" y="817" width="2" height="24" fill="#ff0000"/>
<rect x="484" y="833" width="1" height="23" fill="#00c000"/>
<rect x="483" y="836" width="2" height="9" fill="#00ff00"/>
<rect x="486" y="828" width="1" height="13" fill="#00c000"/>
<rect x="485" y="830" width="2" height="10" fill="#00ff00"/>
<rect x="488" y="812" width="1" height="29" fill="#00c000"/>
<rect x="487" y="822" width="2" height="9" fill="#00ff00"/>
<rect x="490" y="807" width="1" height="30" fill="#00c000"/>
<rect x="489" y="818" width="2" height="9" fill="#00ff00"/>
<rect x="492" y="802" width="1" height="30" fill="#00c000"/>
<rect x="491" y="805" width="2" height="17" fill="#00ff00"/>
<rect x="494" y="799" width="1" height="18" fill="#00c000"/>
<rect x="493" y="801" width="2" height="9" fill="#00ff00"/>
<rect x="496" y="783" width="1" height="26" fill="#00c000"/>
<rect x="495" y="788" width="2" height="17" fill="#00ff00"/>
<rect x="498" y="779" width="1" height="14" fill="#00c000"/>
<rect x="497" y="780" width="2" height="9" fill="#00ff00"/>
<rect x="500" y="769" width="1" height="22" fill="#cc1818"/>
<rect x="499" y="779" width="2" height="9" fill="#ff0000"/>
<rect x="502" y="783" width="1" height="22" fill="#cc1818"/>
<rect x="501" y="786" width="2" height="14" fill="#ff0000"/>
<rect x="504" y="785" width="1" height="24" fill="#00c000"/>
<rect x="503" y="794" width="2" height="9" fill="#00ff00"/>
<rect x="506" y="775" width="1" height="27" fill="#00c000"/>
<rect x="505" y="781" width="2" height="16" fill="#00ff00"/>
<rect x="508" y="778" width="1" height="24" fill="#cc1818"/>
<rect x="507" y="781" width="2" height="16" fill="#ff0000"/>
<rect x="510" y="790" width="1" height="15" fill="#00c000"/>
<rect x="509" y="791" width="2" height="9" fill="#00ff00"/>
<rect x="512" y="780" width="1" height="19" fill="#00c000"/>
<rect x="511" y="789" width="2" height="9" fill="#00ff00"/>
<rect x="514" y="774" width="1" height="28" fill="#00c000"/>
<rect x="513" y="776" width="2" height="16" fill="#00ff00"/>
<rect x="516" y="765" width="1" height="27" fill="#cc1818"/>
<rect x="515" y="773" width="2" height="9" fill="#ff0000"/>
<rect x="518" y="774" width="1" height="23" fill="#cc1818"/>
<rect x="517" y="777" width="2" height="9" fill="#ff0000"/>
<rect x="520" y="780" width="1" height="21" fill="#cc1818"/>
<rect x="519" y="784" width="2" height="9" fill="#ff0000"/>
<rect x="522" y="783" width="1" height="14" fill="#00c000"/>
<rect x="521" y="787" width="2" height="9" fill="#00ff00"/>
<rect x="524" y="780" width="1" height="29" fill="#cc1818"/>
<rect x="523" y="790" width="2" height="12" fill="#ff0000"/>
<rect x="526" y="800" width="1" height="14" fill="#cc1818"/>
<rect x="525" y="801" width="2" height="9" fill="#ff0000"/>
<rect x="528" y="791" width="1" height="29" fill="#00c000"/>
<rect x="527" y="801" width="2" height="8" fill="#00ff00"/>
<rect x="530" y="792" width="1" height="18" fill="#00c000"/>
<rect x="529" y="795" width="2" height="9" fill="#00ff00"/>
<rect x="532" y="784" width="1" height="22" fill="#cc1818"/>
<rect x="531" y="794" width="2" height="9" fill="#ff0000"/>
<rect x="534" y="790" width="1" height="26" fill="#cc1818"/>
<rect x="533" y="799" width="2" height="9" fill="#ff0000"/>
<rect x="536" y="797" width="1" height="20" fill="#cc1818"/>
<rect x="535" y="804" width="2" height="9" fill="#ff0000"/>
<rect x="538" y="792" width="1" height="26" fill="#00c000"/>
<rect x="537" y="797" width="2" height="12" fill="#00ff00"/>
<rect x="540" y="785" width="1" height="20" fill="#00c000"/>
<rect x="539" y="788" width="2" height="9" fill="#00ff00"/>
<rect x="542" y="782" width="1" height="12" fill="#00c000"/>
<rect x="541" y="784" width="2" height="9" fill="#00ff00"/>
<rect x="544" y="783" width="1" height="24" fill="#cc1818"/>
<rect x="543" y="787" width="2" height="9" fill="#ff0000"/>
<rect x="546" y="782" width="1" height="24" fill="#cc1818"/>
<rect x="545" y="793" width="2" height="9" fill="#ff0000"/>
<rect x="548" y="783" width="1" height="24" fill="#00c000"/>
<rect x="547" y="785" width="2" height="16" fill="#00ff00"/>
<rect x="550" y="779" width="1" height="18" fill="#cc1818"/>
<rect x="549" y="784" width="2" height="9" fill="#ff0000"/>
<rect x="552" y="776" width="1" height="24" fill="#00c000"/>
<rect x="551" y="783" width="2" height="9" fill="#00ff00"/>
<rect x="685" y="42" width="1" height="60" fill="#d02020"/><rect x="687" y="84" width="1" height="18" fill="#d02020"/><rect x="685" y="95" width="3" height="7" fill="#ff0000"/><rect x="682" y="94" width="2" height="8" fill="#00e000"/>
<rect x="0" y="947" width="1464" height="1.3" fill="#fff"/>
<rect x="-16" y="951" width="38" height="21" fill="#fff"/>
<text x="-13.5" y="967.5" textLength="34" lengthAdjust="spacingAndGlyphs" fill="#000" >2002</text>
<rect x="3" y="948" width="1" height="3" fill="#fff"/>
<rect x="61" y="948" width="1" height="3" fill="#fff"/>
<rect x="42" y="951" width="38" height="21" fill="#fff"/>
<text x="44" y="967.5" textLength="34" lengthAdjust="spacingAndGlyphs" fill="#000" >2003</text>
<rect x="165" y="948" width="1" height="3" fill="#fff"/>
<rect x="146" y="951" width="38" height="21" fill="#fff"/>
<text x="148" y="967.5" textLength="34" lengthAdjust="spacingAndGlyphs" fill="#000" >2004</text>
<rect x="269" y="948" width="1" height="3" fill="#fff"/>
<rect x="250" y="951" width="38" height="21" fill="#fff"/>
<text x="252" y="967.5" textLength="34" lengthAdjust="spacingAndGlyphs" fill="#000" >2005</text>
<rect x="373" y="948" width="1" height="3" fill="#fff"/>
<rect x="354" y="951" width="38" height="21" fill="#fff"/>
<text x="356" y="967.5" textLength="34" lengthAdjust="spacingAndGlyphs" fill="#000" >2006</text>
<rect x="477" y="948" width="1" height="3" fill="#fff"/>
<rect x="458" y="951" width="38" height="21" fill="#fff"/>
<text x="460" y="967.5" textLength="34" lengthAdjust="spacingAndGlyphs" fill="#000" >2007</text>
<rect x="583" y="948" width="1" height="3" fill="#fff"/>
<rect x="564" y="951" width="38" height="21" fill="#fff"/>
<text x="566" y="967.5" textLength="34" lengthAdjust="spacingAndGlyphs" fill="#000" >2008</text>
<rect x="687" y="948" width="1" height="3" fill="#fff"/>
<rect x="668" y="951" width="38" height="21" fill="#fff"/>
<text x="670" y="967.5" textLength="34" lengthAdjust="spacingAndGlyphs" fill="#000" >2009</text>
<rect x="791" y="948" width="1" height="3" fill="#fff"/>
<rect x="772" y="951" width="38" height="21" fill="#fff"/>
<text x="774" y="967.5" textLength="34" lengthAdjust="spacingAndGlyphs" fill="#000" >2010</text>
<rect x="895" y="948" width="1" height="3" fill="#fff"/>
<rect x="876" y="951" width="38" height="21" fill="#fff"/>
<text x="878" y="967.5" textLength="34" lengthAdjust="spacingAndGlyphs" fill="#000" >2011</text>
<rect x="999" y="948" width="1" height="3" fill="#fff"/>
<rect x="980" y="951" width="38" height="21" fill="#fff"/>
<text x="982" y="967.5" textLength="34" lengthAdjust="spacingAndGlyphs" fill="#000" >2012</text>
<rect x="1105" y="948" width="1" height="3" fill="#fff"/>
<rect x="1086" y="951" width="38" height="21" fill="#fff"/>
<text x="1088" y="967.5" textLength="34" lengthAdjust="spacingAndGlyphs" fill="#000" >2013</text>
<rect x="1209" y="948" width="1" height="3" fill="#fff"/>
<rect x="1190" y="951" width="38" height="21" fill="#fff"/>
<text x="1192" y="967.5" textLength="34" lengthAdjust="spacingAndGlyphs" fill="#000" >2014</text>
<rect x="1313" y="948" width="1" height="3" fill="#fff"/>
<rect x="1294" y="951" width="38" height="21" fill="#fff"/>
<text x="1296" y="967.5" textLength="34" lengthAdjust="spacingAndGlyphs" fill="#000" >2015</text>
<rect x="1417" y="948" width="1" height="3" fill="#fff"/>
<rect x="1398" y="951" width="38" height="21" fill="#fff"/>
<text x="1400" y="967.5" textLength="34" lengthAdjust="spacingAndGlyphs" fill="#000" >2016</text>
<rect x="103" y="948" width="1" height="3" fill="#fff"/>
<rect x="90" y="951" width="26" height="21" fill="#fff"/>
<text x="91.5" y="967.5" textLength="23" lengthAdjust="spacingAndGlyphs" fill="#000" >Jun</text>
<rect x="209" y="948" width="1" height="3" fill="#fff"/>
<rect x="196" y="951" width="26" height="21" fill="#fff"/>
<text x="197.5" y="967.5" textLength="23" lengthAdjust="spacingAndGlyphs" fill="#000" >Jun</text>
<rect x="313" y="948" width="1" height="3" fill="#fff"/>
<rect x="300" y="951" width="26" height="21" fill="#fff"/>
<text x="301.5" y="967.5" textLength="23" lengthAdjust="spacingAndGlyphs" fill="#000" >Jun</text>
<rect x="417" y="948" width="1" height="3" fill="#fff"/>
<rect x="404" y="951" width="26" height="21" fill="#fff"/>
<text x="405.5" y="967.5" textLength="23" lengthAdjust="spacingAndGlyphs" fill="#000" >Jun</text>
<rect x="521" y="948" width="1" height="3" fill="#fff"/>
<rect x="508" y="951" width="26" height="21" fill="#fff"/>
<text x="509.5" y="967.5" textLength="23" lengthAdjust="spacingAndGlyphs" fill="#000" >Jun</text>
<rect x="625" y="948" width="1" height="3" fill="#fff"/>
<rect x="612" y="951" width="26" height="21" fill="#fff"/>
<text x="613.5" y="967.5" textLength="23" lengthAdjust="spacingAndGlyphs" fill="#000" >Jun</text>
<rect x="729" y="948" width="1" height="3" fill="#fff"/>
<rect x="716" y="951" width="26" height="21" fill="#fff"/>
<text x="717.5" y="967.5" textLength="23" lengthAdjust="spacingAndGlyphs" fill="#000" >Jun</text>
<rect x="835" y="948" width="1" height="3" fill="#fff"/>
<rect x="822" y="951" width="26" height="21" fill="#fff"/>
<text x="823.5" y="967.5" textLength="23" lengthAdjust="spacingAndGlyphs" fill="#000" >Jun</text>
<rect x="939" y="948" width="1" height="3" fill="#fff"/>
<rect x="926" y="951" width="26" height="21" fill="#fff"/>
<text x="927.5" y="967.5" textLength="23" lengthAdjust="spacingAndGlyphs" fill="#000" >Jun</text>
<rect x="1043" y="948" width="1" height="3" fill="#fff"/>
<rect x="1030" y="951" width="26" height="21" fill="#fff"/>
<text x="1031.5" y="967.5" textLength="23" lengthAdjust="spacingAndGlyphs" fill="#000" >Jun</text>
<rect x="1147" y="948" width="1" height="3" fill="#fff"/>
<rect x="1134" y="951" width="26" height="21" fill="#fff"/>
<text x="1135.5" y="967.5" textLength="23" lengthAdjust="spacingAndGlyphs" fill="#000" >Jun</text>
<rect x="1251" y="948" width="1" height="3" fill="#fff"/>
<rect x="1238" y="951" width="26" height="21" fill="#fff"/>
<text x="1239.5" y="967.5" textLength="23" lengthAdjust="spacingAndGlyphs" fill="#000" >Jun</text>
<rect x="1355" y="948" width="1" height="3" fill="#fff"/>
<rect x="1342" y="951" width="26" height="21" fill="#fff"/>
<text x="1343.5" y="967.5" textLength="23" lengthAdjust="spacingAndGlyphs" fill="#000" >Jun</text>
<rect x="1461" y="948" width="1" height="3" fill="#fff"/>
<rect x="1448" y="951" width="26" height="21" fill="#fff"/>
<text x="1449.5" y="967.5" textLength="23" lengthAdjust="spacingAndGlyphs" fill="#000" >Jun</text>
</svg>
<div id="scroll" class="abs"><div class="abs" style="left:6px;top:5px;border:6px solid transparent;border-right:6px solid #7a7a7a;border-left:0"></div></div>
<div id="dlg" class="abs">
<div class="abs" style="left:-8px;top:6px;width:280px;height:25px;border-radius:12px;background:#a4c1f0;filter:blur(6px);opacity:.97"></div>
<div class="abs" style="left:560px;top:0;width:443px;height:36px;background:linear-gradient(100deg,rgba(70,125,210,0) 0%,rgba(70,125,210,.25) 18%,rgba(70,125,210,.05) 30%,rgba(70,125,210,.15) 55%,rgba(95,145,225,.7) 84%,rgba(115,162,235,.85) 100%)"></div>
<div class="abs" style="left:1px;top:30px;width:7px;height:164px;background:linear-gradient(180deg,#6c98da,#8fb2e6 70%,#b4cdf0)"></div>
<div class="abs" style="right:1px;top:24px;width:7px;height:170px;background:linear-gradient(180deg,#6c98da,#8fb2e6 70%,#b4cdf0)"></div>
<div class="abs edge"></div>
<svg class="abs" style="left:0;top:0" width="300" height="36" viewBox="0 0 300 36" font-family="Liberation Sans, sans-serif" font-size="16"><text x="8" y="24" textLength="260" lengthAdjust="spacingAndGlyphs" fill="#000" style="white-space:pre">Chart Settings - EURGBP&#160;&#160;Weekly&#160;&#160;#1</text></svg>
<div class="abs" style="left:864px;top:0;width:41px;height:27px;border:1px solid #1b3a78;border-top:0;border-radius:0 0 5px 5px;background:linear-gradient(180deg,#b4c9ea 0,#93b1df 50%,#2c60b6 52%,#3c70c2 100%);box-shadow:inset 0 -1px 0 1px rgba(255,255,255,.45)"></div>
<div class="abs" style="left:932px;top:0;width:64px;height:27px;border:1px solid #4a1212;border-top:0;border-radius:0 0 5px 5px;background:linear-gradient(180deg,#eab3aa 0,#dc8579 50%,#c63621 52%,#d4573f 100%);box-shadow:inset 0 -1px 0 1px rgba(255,255,255,.4)"></div>
<svg class="abs" style="left:955px;top:4px" width="20" height="18" viewBox="0 0 20 18"><path d="M1.2 1.5L7 1.5L10 5.3L13 1.5L18.8 1.5L13 8.7L18.8 16L13 16L10 12.1L7 16L1.2 16L7 8.7Z" fill="#fff" stroke="#4a3434" stroke-width="1.1" stroke-linejoin="round"/></svg>
<svg class="abs" style="left:877px;top:6px" width="15" height="14" viewBox="0 0 15 14"><g fill="#fff" stroke="#24365e" stroke-width="1.3" stroke-linejoin="round"><circle cx="8.2" cy="3.6" r="2.5"/><ellipse cx="7.2" cy="7.6" rx="5.4" ry="2.5" transform="rotate(-18 7.2 7.6)"/><rect x="2.2" y="9" width="3" height="3.8" rx="1"/><rect x="6.4" y="8.8" width="3.2" height="4" rx="1"/></g><g fill="#fff"><circle cx="8.2" cy="3.6" r="2.5"/><ellipse cx="7.2" cy="7.6" rx="5.4" ry="2.5" transform="rotate(-18 7.2 7.6)"/><rect x="2.2" y="9" width="3" height="3.8" rx="1"/><rect x="6.4" y="8.8" width="3.2" height="4" rx="1"/></g><circle cx="7.6" cy="7.2" r="0.9" fill="#3a4a72"/><circle cx="8.4" cy="3.4" r="0.6" fill="#7a88a8"/></svg>
<div id="client" class="abs">
<div class="abs" style="left:16px;top:39px;width:956px;height:543px;border:1px solid;border-color:#fff #696969 #696969 #fff;box-shadow:inset -1px -1px 0 #a0a0a0, inset 1px 1px 0 #f0f0f0"></div>
<div class="abs" style="left:16px;top:12px;width:113px;height:27px;background:#f0f0f0;border:1px solid;border-color:#fff #696969 #f0f0f0 #fff;border-bottom:0;box-shadow:inset -1px 0 0 #a0a0a0;border-radius:2px 2px 0 0"></div>
<div class="abs" style="left:17px;top:39px;width:110px;height:2px;background:#f0f0f0"></div>
<div class="abs" style="left:129px;top:15px;width:144px;height:24px;border-top:1px solid #fff;border-right:1px solid #696969;box-shadow:inset -1px 0 0 #a0a0a0;border-radius:0 2px 0 0"></div>
<div class="abs" style="left:273px;top:15px;width:159px;height:24px;border-top:1px solid #fff;border-right:1px solid #696969;box-shadow:inset -1px 0 0 #a0a0a0;border-radius:0 2px 0 0"></div>
<div class="abs" style="left:432px;top:15px;width:54px;height:24px;border-top:1px solid #fff;border-right:1px solid #696969;box-shadow:inset -1px 0 0 #a0a0a0;border-radius:0 2px 0 0"></div>
<div class="t " style="left:23px;top:15px;letter-spacing:0.104px;">Main Settings</div>
<div class="t " style="left:134px;top:17px;letter-spacing:0.024px;">Advanced Settings</div>
<div class="t " style="left:279px;top:17px;letter-spacing:0.003px;">Advanced Settings 2</div>
<div class="t " style="left:439px;top:17px;letter-spacing:-0.080px;">Alerts</div>
<div class="t " style="left:34px;top:59px;letter-spacing:-0.171px;">Date Range In File (yyyy-mm-dd):</div>
<div class="abs" style="left:63px;top:83px;width:308px;height:29px;border:1px solid;border-color:#a0a0a0 #fff #fff #a0a0a0"></div>
<div class="t " style="left:65px;top:85px;letter-spacing:-0.014px;">1993-05-11 to 2014-06-13</div>
<div class="abs" style="left:250px;top:84px;width:1px;height:19px;background:#000"></div>
<div class="grp" style="left:34px;top:130px;width:337px;height:84px"><div class="gap" style="left:11px;top:-2px;width:244px"></div></div>
<svg class="rb" style="left:46.5px;top:125.0px" viewBox="0 0 14 14"><circle cx="7" cy="7" r="5.4" fill="#fff"/><path d="M2.4 11.6A6.5 6.5 0 0 1 11.6 2.4" fill="none" stroke="#a0a0a0" stroke-width="1"/><path d="M3.1 10.9A5.5 5.5 0 0 1 10.9 3.1" fill="none" stroke="#696969" stroke-width="1"/><path d="M11.6 2.4A6.5 6.5 0 0 1 2.4 11.6" fill="none" stroke="#fff" stroke-width="1"/><path d="M10.9 3.1A5.5 5.5 0 0 1 3.1 10.9" fill="none" stroke="#e3e3e3" stroke-width="1"/><circle cx="7" cy="7" r="3" fill="#000"/></svg>
<div class="t " style="left:68px;top:123px;letter-spacing:-0.005px;">Use Number Of Days To Load</div>
<div class="t " style="left:88px;top:151px;letter-spacing:0.127px;">Days To Load:</div>
<div class="edit" style="left:198px;top:146px;width:107px;height:28px;"><div class="spin u"></div><div class="spin l"></div></div>
<div class="t " style="left:201px;top:149px;letter-spacing:0.128px;">4380</div>
<div class="cb " style="left:63px;top:181px"></div>
<div class="t " style="left:87px;top:181px;letter-spacing:-0.114px;">Adjust Proportional With Bar Period</div>
<div class="grp" style="left:34px;top:230px;width:337px;height:59px"><div class="gap" style="left:11px;top:-2px;width:152px"></div></div>
<svg class="rb" style="left:46.5px;top:224.5px" viewBox="0 0 14 14"><circle cx="7" cy="7" r="5.4" fill="#fff"/><path d="M2.4 11.6A6.5 6.5 0 0 1 11.6 2.4" fill="none" stroke="#a0a0a0" stroke-width="1"/><path d="M3.1 10.9A5.5 5.5 0 0 1 10.9 3.1" fill="none" stroke="#696969" stroke-width="1"/><path d="M11.6 2.4A6.5 6.5 0 0 1 2.4 11.6" fill="none" stroke="#fff" stroke-width="1"/><path d="M10.9 3.1A5.5 5.5 0 0 1 3.1 10.9" fill="none" stroke="#e3e3e3" stroke-width="1"/></svg>
<div class="t " style="left:68px;top:223px;letter-spacing:0.242px;">Use Date Range</div>
<div class="t dis" style="left:66px;top:251px;letter-spacing:-0.377px;">From:</div>
<div class="edit ro" style="left:110px;top:246px;width:103px;height:28px;"></div>
<div class="t dis" style="left:227px;top:251px;letter-spacing:-0.144px;">To:</div>
<div class="edit ro" style="left:250px;top:246px;width:103px;height:28px;"></div>
<div class="t " style="left:90px;top:304px;letter-spacing:-0.133px;">Price Display Format:</div>
<div class="edit" style="left:250px;top:300px;width:121px;height:27px;"><div class="dd"></div></div>
<div class="t " style="left:254px;top:305px;letter-spacing:-0.090px;">.00001</div>
<div class="t " style="left:173px;top:339px;letter-spacing:-0.188px;">Tick Size:</div>
<div class="edit" style="left:250px;top:335px;width:121px;height:29px;"></div>
<div class="t " style="left:253px;top:339px;letter-spacing:0.036px;">0.000010</div>
<div class="t " style="left:63px;top:374px;letter-spacing:-0.171px;">Volume at Price Multiplier:</div>
<div class="edit" style="left:250px;top:370px;width:121px;height:27px;"><div class="dd"></div></div>
<div class="t " style="left:253px;top:374px;letter-spacing:0.000px;">5</div>
<div class="t " style="left:34px;top:406px;letter-spacing:-0.187px;">Symbol:</div>
<div class="edit" style="left:63px;top:428px;width:224px;height:29px;"></div>
<div class="t " style="left:66px;top:432px;letter-spacing:0.416px;">EURGBP</div>
<div class="btn" style="left:304px;top:428px;width:68px;height:30px;"></div>
<div class="t " style="left:322px;top:433px;letter-spacing:0.238px;">Find</div>
<div class="t " style="left:35px;top:469px;letter-spacing:-0.104px;">Trade and Current Quote Symbol:</div>
<div class="edit" style="left:63px;top:490px;width:224px;height:29px;"></div>
<div class="btn" style="left:304px;top:490px;width:68px;height:30px;"></div>
<div class="t " style="left:322px;top:495px;letter-spacing:0.238px;">Find</div>
<div class="cb " style="left:34px;top:537px"></div>
<div class="t " style="left:58px;top:536px;letter-spacing:-0.127px;">Automatically Rollover Futures Symbol</div>
<div class="edit" style="left:389px;top:58px;width:309px;height:27px;"><div class="dd"></div></div>
<div class="t " style="left:393px;top:63px;letter-spacing:-0.056px;">Historical Chart</div>
<div class="grp" style="left:389px;top:95px;width:310px;height:167px"><div class="gap" style="left:9px;top:-2px;width:143px"></div></div>
<div class="t " style="left:400px;top:86px;letter-spacing:-0.077px;">Intraday Bar Period:</div>
<div class="t " style="left:407px;top:114px;letter-spacing:-0.028px;">Bar Period</div>
<div class="edit ro" style="left:407px;top:138px;width:274px;height:27px;"><div class="dd d"></div></div>
<div class="t gt" style="left:410px;top:143px;letter-spacing:-0.109px;">Days-Mins-Secs Per Bar</div>
<div class="edit ro" style="left:407px;top:174px;width:141px;height:29px;"></div>
<div class="t gt" style="left:410px;top:177px;letter-spacing:0.172px;">0-1-0</div>
<div class="cb d" style="left:407px;top:209px"></div>
<div class="t dis" style="left:431px;top:208px;letter-spacing:-0.121px;">Fill Session Gap</div>
<div class="cb d" style="left:407px;top:237px"></div>
<div class="t dis" style="left:431px;top:236px;letter-spacing:-0.103px;">New Bar When Exceeded</div>
<div class="grp" style="left:389px;top:275px;width:310px;height:238px"><div class="gap" style="left:9px;top:-2px;width:110px"></div></div>
<div class="t " style="left:400px;top:266px;letter-spacing:-0.062px;">Session Times:</div>
<div class="t " style="left:410px;top:294px;letter-spacing:0.092px;">Start Time:</div>
<div class="edit ro" style="left:536px;top:290px;width:150px;height:29px;"><div class="spin u d"></div><div class="spin l d"></div></div>
<div class="t gt" style="left:540px;top:295px;letter-spacing:-0.049px;">00:00:00</div>
<div class="t " style="left:409px;top:329px;letter-spacing:0.092px;">End Time:</div>
<div class="edit ro" style="left:536px;top:325px;width:150px;height:29px;"><div class="spin u d"></div><div class="spin l d"></div></div>
<div class="t gt" style="left:540px;top:330px;letter-spacing:-0.005px;">23:59:59</div>
<div class="cb d" style="left:410px;top:361px"></div>
<div class="t dis" style="left:434px;top:361px;letter-spacing:-0.057px;">Use Evening Session</div>
<div class="t " style="left:409px;top:391px;letter-spacing:0.120px;">Evening Start:</div>
<div class="edit ro" style="left:536px;top:385px;width:150px;height:29px;"><div class="spin u d"></div><div class="spin l d"></div></div>
<div class="t gt" style="left:540px;top:390px;letter-spacing:-0.049px;">00:00:00</div>
<div class="t " style="left:409px;top:426px;letter-spacing:0.071px;">Evening End:</div>
<div class="edit ro" style="left:536px;top:420px;width:150px;height:29px;"><div class="spin u d"></div><div class="spin l d"></div></div>
<div class="t gt" style="left:540px;top:425px;letter-spacing:-0.005px;">23:59:59</div>
<div class="cb d" style="left:410px;top:459px"><svg style="position:absolute;left:2px;top:2px" width="11" height="11" viewBox="0 0 11 11"><path d="M1.6 4.8L4.3 7.6L9.4 2.2" fill="none" stroke="#989898" stroke-width="2.2"/></svg></div>
<div class="t dis" style="left:434px;top:459px;letter-spacing:0.008px;">New Bar At Session Start</div>
<div class="cb d" style="left:410px;top:486px"><svg style="position:absolute;left:2px;top:2px" width="11" height="11" viewBox="0 0 11 11"><path d="M1.6 4.8L4.3 7.6L9.4 2.2" fill="none" stroke="#989898" stroke-width="2.2"/></svg></div>
<div class="t dis" style="left:434px;top:486px;letter-spacing:0.039px;">Load Weekend Data</div>
<div class="grp" style="left:711px;top:58px;width:247px;height:154px"><div class="gap" style="left:8px;top:-2px;width:194px"></div></div>
<div class="t " style="left:721px;top:49px;letter-spacing:-0.073px;">Historical Chart Bar Period:</div>
<svg class="rb" style="left:735.6px;top:79.7px" viewBox="0 0 14 14"><circle cx="7" cy="7" r="5.4" fill="#fff"/><path d="M2.4 11.6A6.5 6.5 0 0 1 11.6 2.4" fill="none" stroke="#a0a0a0" stroke-width="1"/><path d="M3.1 10.9A5.5 5.5 0 0 1 10.9 3.1" fill="none" stroke="#696969" stroke-width="1"/><path d="M11.6 2.4A6.5 6.5 0 0 1 2.4 11.6" fill="none" stroke="#fff" stroke-width="1"/><path d="M10.9 3.1A5.5 5.5 0 0 1 3.1 10.9" fill="none" stroke="#e3e3e3" stroke-width="1"/></svg>
<div class="t " style="left:757px;top:78px;letter-spacing:0.017px;">Days:</div>
<svg class="rb" style="left:735.6px;top:104.7px" viewBox="0 0 14 14"><circle cx="7" cy="7" r="5.4" fill="#fff"/><path d="M2.4 11.6A6.5 6.5 0 0 1 11.6 2.4" fill="none" stroke="#a0a0a0" stroke-width="1"/><path d="M3.1 10.9A5.5 5.5 0 0 1 10.9 3.1" fill="none" stroke="#696969" stroke-width="1"/><path d="M11.6 2.4A6.5 6.5 0 0 1 2.4 11.6" fill="none" stroke="#fff" stroke-width="1"/><path d="M10.9 3.1A5.5 5.5 0 0 1 3.1 10.9" fill="none" stroke="#e3e3e3" stroke-width="1"/><circle cx="7" cy="7" r="3" fill="#000"/></svg>
<div class="t " style="left:758px;top:103px;letter-spacing:-0.453px;">Weekly</div>
<svg class="rb" style="left:735.6px;top:129.7px" viewBox="0 0 14 14"><circle cx="7" cy="7" r="5.4" fill="#fff"/><path d="M2.4 11.6A6.5 6.5 0 0 1 11.6 2.4" fill="none" stroke="#a0a0a0" stroke-width="1"/><path d="M3.1 10.9A5.5 5.5 0 0 1 10.9 3.1" fill="none" stroke="#696969" stroke-width="1"/><path d="M11.6 2.4A6.5 6.5 0 0 1 2.4 11.6" fill="none" stroke="#fff" stroke-width="1"/><path d="M10.9 3.1A5.5 5.5 0 0 1 3.1 10.9" fill="none" stroke="#e3e3e3" stroke-width="1"/></svg>
<div class="t " style="left:757px;top:128px;letter-spacing:-0.047px;">Monthly</div>
<svg class="rb" style="left:735.6px;top:155.0px" viewBox="0 0 14 14"><circle cx="7" cy="7" r="5.4" fill="#fff"/><path d="M2.4 11.6A6.5 6.5 0 0 1 11.6 2.4" fill="none" stroke="#a0a0a0" stroke-width="1"/><path d="M3.1 10.9A5.5 5.5 0 0 1 10.9 3.1" fill="none" stroke="#696969" stroke-width="1"/><path d="M11.6 2.4A6.5 6.5 0 0 1 2.4 11.6" fill="none" stroke="#fff" stroke-width="1"/><path d="M10.9 3.1A5.5 5.5 0 0 1 3.1 10.9" fill="none" stroke="#e3e3e3" stroke-width="1"/></svg>
<div class="t " style="left:757px;top:153px;letter-spacing:-0.177px;">Quarterly</div>
<svg class="rb" style="left:735.6px;top:180.2px" viewBox="0 0 14 14"><circle cx="7" cy="7" r="5.4" fill="#fff"/><path d="M2.4 11.6A6.5 6.5 0 0 1 11.6 2.4" fill="none" stroke="#a0a0a0" stroke-width="1"/><path d="M3.1 10.9A5.5 5.5 0 0 1 10.9 3.1" fill="none" stroke="#696969" stroke-width="1"/><path d="M11.6 2.4A6.5 6.5 0 0 1 2.4 11.6" fill="none" stroke="#fff" stroke-width="1"/><path d="M10.9 3.1A5.5 5.5 0 0 1 3.1 10.9" fill="none" stroke="#e3e3e3" stroke-width="1"/></svg>
<div class="t " style="left:758px;top:179px;letter-spacing:-0.061px;">Yearly</div>
<div class="edit" style="left:828px;top:75px;width:107px;height:29px;"></div>
<div class="t " style="left:832px;top:79px;letter-spacing:0.000px;">1</div>
<div class="t " style="left:711px;top:226px;letter-spacing:-0.052px;">Graph Draw Type:</div>
<div class="edit" style="left:711px;top:250px;width:247px;height:127px;"><div class="abs" style="right:1px;top:1px;bottom:1px;width:21px;background:#f0f0f0"></div><div class="abs" style="right:7.5px;top:10px;border:4.5px solid transparent;border-bottom:5px solid #404040;border-top:0"></div><div class="abs" style="right:7.5px;bottom:9px;border:4.5px solid transparent;border-top:5px solid #404040;border-bottom:0"></div><div class="abs" style="right:1px;top:25px;width:21px;height:27px;border:1px solid #979797;border-radius:2px;background:linear-gradient(90deg,#f6f6f6,#e6e6e6 50%,#d4d4d4)"><div class="abs" style="left:5px;top:8px;width:9px;height:1px;background:#606060;box-shadow:0 4px 0 #606060,0 8px 0 #606060"></div></div></div>
<div class="abs" style="left:713px;top:272px;width:221px;height:20px;background:#3399ff"></div>
<div class="t " style="left:715px;top:253px;letter-spacing:-0.010px;">OHLC Bars</div>
<div class="t " style="left:715px;top:273px;letter-spacing:-0.024px;color:#fff">Candlestick Bars</div>
<div class="t " style="left:715px;top:293px;letter-spacing:-0.186px;">Candlestick Body Only</div>
<div class="t " style="left:714px;top:313px;letter-spacing:-0.044px;">Line on Close</div>
<div class="t " style="left:714px;top:333px;letter-spacing:0.218px;">Mountain</div>
<div class="t " style="left:714px;top:353px;letter-spacing:0.118px;">HLC Bars</div>
<div class="btn" style="left:711px;top:388px;width:104px;height:35px;"></div>
<div class="t " style="left:743px;top:396px;letter-spacing:0.076px;">Scale</div>
<div class="btn" style="left:713px;top:438px;width:234px;height:35px;"></div>
<div class="t " style="left:727px;top:446px;letter-spacing:-0.114px;">Apply Global Symbol Settings</div>
<div class="btn" style="left:713px;top:480px;width:234px;height:35px;"></div>
<div class="t " style="left:731px;top:488px;letter-spacing:-0.013px;">Edit Global Symbol Settings</div>
<div class="cb " style="left:425px;top:537px"></div>
<div class="t " style="left:448px;top:536px;letter-spacing:-0.084px;">Save Days to Load, Intraday Bar Period, Graph Draw Type as Default</div>
<div class="btn def" style="left:16px;top:588px;width:110px;height:35px;"></div>
<div class="t " style="left:60px;top:596px;letter-spacing:0.005px;">OK</div>
<div class="btn" style="left:135px;top:588px;width:110px;height:35px;"></div>
<div class="t " style="left:165px;top:596px;letter-spacing:0.114px;">Cancel</div>
<div class="btn" style="left:254px;top:588px;width:110px;height:35px;"></div>
<div class="t " style="left:289px;top:596px;letter-spacing:-0.141px;">Apply</div>
<div class="btn" style="left:374px;top:588px;width:110px;height:35px;"></div>
<div class="t " style="left:411px;top:596px;letter-spacing:0.524px;">Help</div>
</div></div>
</body></html>
